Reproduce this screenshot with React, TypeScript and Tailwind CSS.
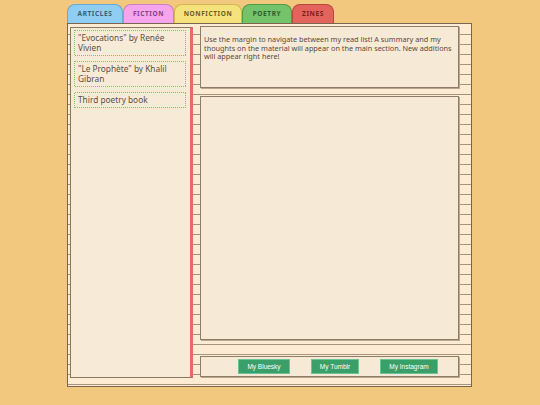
export default function App() {
  const tabs = [
    { label: 'ARTICLES', w: 'w-[56px]', cls: 'bg-[#8fcdf2] border-[#6aaad0] text-[#3f5c72]' },
    { label: 'FICTION', w: 'w-[51px]', cls: 'bg-[#f5a5ee] border-[#cf7fc8] text-[#8a3f86]' },
    { label: 'NONFICTION', w: 'w-[68px]', cls: 'bg-[#f6e27c] border-[#cfb94f] text-[#6e5d17]' },
    { label: 'POETRY', w: 'w-[50px]', cls: 'bg-[#74c36b] border-[#509a48] text-[#2f5b2b]' },
    { label: 'ZINES', w: 'w-[42px]', cls: 'bg-[#e2645c] border-[#b94740] text-[#7d1e1e]' },
  ];

  const books = [
    { title: '"Evocations" by Renée Vivien', h: 'h-[26px]' },
    { title: '"Le Prophète" by Khalil Gibran', h: 'h-[26px]' },
    { title: 'Third poetry book', h: 'h-[16px]' },
  ];

  const links = [
    { label: 'My Bluesky', w: 'w-[52px]' },
    { label: 'My Tumblr', w: 'w-[48px]' },
    { label: 'My Instagram', w: 'w-[58px]' },
  ];

  return (
    <div className="w-[540px] h-[405px] bg-[#f2c77e] pt-[4px] pl-[67px] overflow-hidden font-['Noto_Sans','Open_Sans',sans-serif]">
      {/* tabs */}
      <div className="flex h-[19px]">
        {tabs.map((t) => (
          <div
            key={t.label}
            className={`${t.w} ${t.cls} h-[19px] border border-b-0 rounded-t-[8px] flex items-center justify-center text-[6.5px] font-bold tracking-[0.6px]`}
          >
            {t.label}
          </div>
        ))}
      </div>

      {/* lined paper */}
      <div className="w-[405px] h-[364px] border border-[#7a6650] flex pl-[2px] pt-[3px] pb-[8px] bg-[#fdebd3] bg-[repeating-linear-gradient(to_bottom,transparent_0px,transparent_9px,#a8937b_9px,#a8937b_10px)] bg-[position:0_1px]">
        {/* margin / sidebar */}
        <div className="w-[123px] h-full bg-[#f7ead6] border border-[#8a7762] border-r-[3px] border-r-[#e86b6b] pt-[2px] pl-[3px] pr-[4px] flex flex-col gap-[5px]">
          {books.map((b) => (
            <div
              key={b.title}
              className={`${b.h} [background:linear-gradient(to_right,#7cc466_50%,transparent_0)_top/2px_1px_repeat-x,linear-gradient(to_right,#7cc466_50%,transparent_0)_bottom/2px_1px_repeat-x,linear-gradient(to_bottom,#7cc466_50%,transparent_0)_left/1px_2px_repeat-y,linear-gradient(to_bottom,#7cc466_50%,transparent_0)_right/1px_2px_repeat-y] pl-[4px] pr-[3px] pt-[3px] text-[8.3px] leading-[9.5px] text-[#5d4f44]`}
            >
              {b.title}
            </div>
          ))}
        </div>

        {/* main column */}
        <div className="w-[259px] ml-[7px] -mt-[1px] flex flex-col">
          <div className="h-[62px] bg-[#f6e9d5] border border-[#8f7c67] shadow-[1px_1px_0_#b8a68f] px-[3px] pt-[8px] text-[7.3px] leading-[8.7px] text-[#5a4a3c]">
            Use the margin to navigate between my read list! A summary and my thoughts on the material will appear on the main section. New additions will appear right here!
          </div>
          <div className="h-[244px] mt-[8px] bg-[#f6e9d5] border border-[#8f7c67] shadow-[1px_1px_0_#b8a68f]" />
          <div className="h-[21px] mt-[16px] bg-[#f6e9d5] border border-[#8f7c67] shadow-[1px_1px_0_#b8a68f] flex items-center pl-[37px] gap-[21px]">
            {links.map((l) => (
              <div
                key={l.label}
                className={`${l.w} h-[15px] bg-[#3a9f69] border border-[#6cc293] flex items-center justify-center text-white text-[6.5px] font-['Liberation_Sans',Arial,sans-serif]`}
              >
                {l.label}
              </div>
            ))}
          </div>
        </div>
      </div>
    </div>
  );
}
